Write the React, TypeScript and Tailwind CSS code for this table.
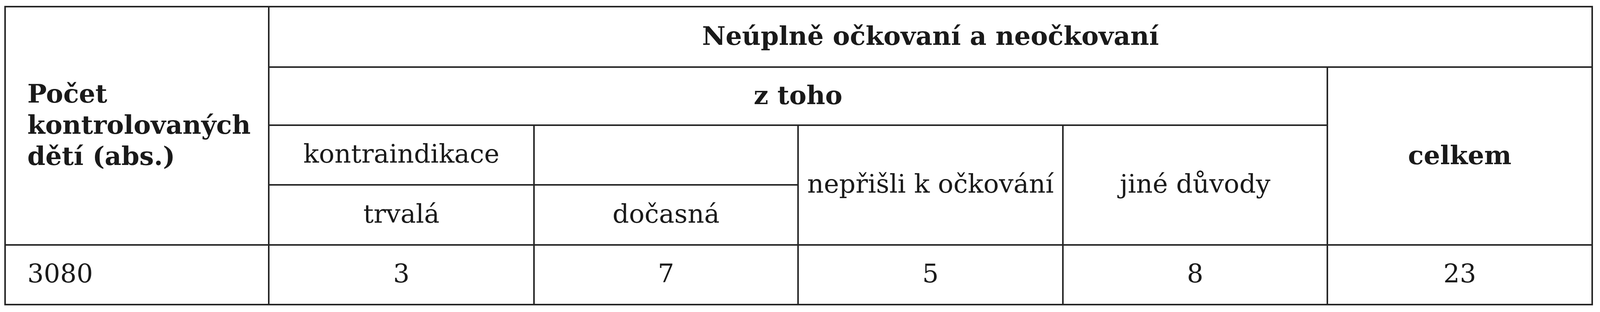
/**
 * Očkování – kontrolní tabulka
 * Grid-based table; the 4px rules are the dark gap between white cells.
 */

const cell = 'bg-white flex items-center justify-center pb-[5px]';

export default function App() {
  return (
    <div className="min-h-screen bg-white pt-[15px] pl-[11px] font-['DejaVu_Serif',serif] text-[66px] leading-[80px] text-[#1a1a1a]">
      <div className="inline-grid grid-cols-[671px_675px_672px_674px_673px_674px] grid-rows-[151px_145px_149px_150px_149px] gap-[4px] bg-[#262626] p-[4px]">
        {/* Left header column */}
        <div className="col-start-1 row-start-1 row-span-4 bg-white flex items-center pl-[55px] pb-[5px] font-bold">
          <span>
            Počet
            <br />
            kontrolovaných
            <br />
            dětí (abs.)
          </span>
        </div>

        {/* Top group header */}
        <div className={`${cell} col-start-2 col-span-5 row-start-1 font-bold`}>
          Neúplně očkovaní a neočkovaní
        </div>

        <div className={`${cell} col-start-2 col-span-4 row-start-2 font-bold`}>z toho</div>
        <div className={`${cell} col-start-6 row-start-2 row-span-3 font-bold`}>celkem</div>

        {/* Reasons */}
        <div className={`${cell} col-start-2 row-start-3`}>kontraindikace</div>
        <div className={`${cell} col-start-3 row-start-3`} />
        <div className={`${cell} col-start-4 row-start-3 row-span-2`}>nepřišli k očkování</div>
        <div className={`${cell} col-start-5 row-start-3 row-span-2`}>jiné důvody</div>
        <div className={`${cell} col-start-2 row-start-4`}>trvalá</div>
        <div className={`${cell} col-start-3 row-start-4`}>dočasná</div>

        {/* Data row */}
        <div className="col-start-1 row-start-5 bg-white flex items-center pl-[55px] pb-[5px]">3080</div>
        <div className={`${cell} col-start-2 row-start-5`}>3</div>
        <div className={`${cell} col-start-3 row-start-5`}>7</div>
        <div className={`${cell} col-start-4 row-start-5`}>5</div>
        <div className={`${cell} col-start-5 row-start-5`}>8</div>
        <div className={`${cell} col-start-6 row-start-5`}>23</div>
      </div>
    </div>
  );
}
